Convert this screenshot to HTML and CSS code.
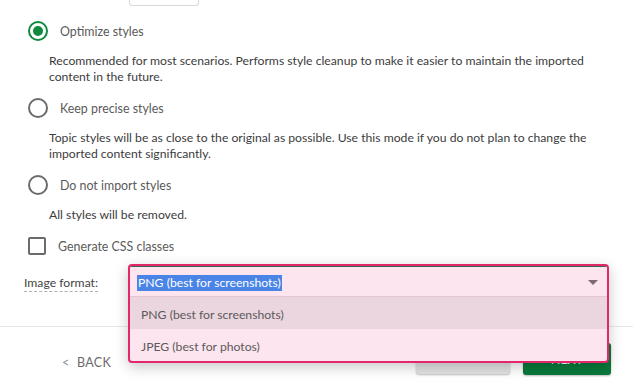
FILE: index.html
```html
<!DOCTYPE html>
<html>
<head>
<meta charset="utf-8">
<link rel="stylesheet" href="styles.css">
</head>
<body>
<div class="page">
  <div class="topbox"></div>
  <div class="content">
    <div class="radio-row r1">
      <span class="radio checked"><span class="dot"></span></span>
      <span class="label">Optimize styles</span>
    </div>
    <p class="desc">Recommended for most scenarios. Performs style cleanup to make it easier to maintain the imported content in the future.</p>
    <div class="radio-row">
      <span class="radio"></span>
      <span class="label">Keep precise styles</span>
    </div>
    <p class="desc">Topic styles will be as close to the original as possible. Use this mode if you do not plan to change the imported content significantly.</p>
    <div class="radio-row">
      <span class="radio"></span>
      <span class="label">Do not import styles</span>
    </div>
    <p class="desc d3">All styles will be removed.</p>
    <div class="check-row">
      <span class="checkbox"></span>
      <span class="label">Generate CSS classes</span>
    </div>
  </div>
  <div class="format-row">
    <span class="format-label">Image format:</span>
    <div class="combo">
      <div class="combo-frame">
        <div class="combo-head">
          <span class="sel">PNG (best for screenshots)</span>
          <span class="arrow"></span>
        </div>
        <div class="opt hover">PNG (best for screenshots)</div>
        <div class="opt">JPEG (best for photos)</div>
      </div>
    </div>
  </div>
  <div class="footer">
    <div class="back"><span class="chev">&lt;</span> BACK</div>
    <div class="btns">
      <div class="btn cancel">CANCEL</div>
      <div class="btn next">NEXT</div>
    </div>
  </div>
</div>
</body>
</html>
```
FILE: styles.css
```css
* { box-sizing: border-box; }
html, body { margin: 0; padding: 0; background: #fff; }
body {
  font-family: "Lato", "Noto Sans", sans-serif;
  font-size: 12.2px;
  color: #333;
  width: 633px;
  height: 387px;
  overflow: hidden;
}
.page { position: relative; }
.topbox {
  margin-left: 129px;
  width: 70px;
  height: 6px;
  border: 1px solid #d9d9d9;
  border-top: none;
  border-radius: 0 0 3px 3px;
}
.content { padding-left: 28px; }
.radio-row {
  display: flex;
  align-items: center;
  height: 20px;
  margin-top: 13px;
}
.radio-row.r1 { margin-top: 15px; }
.radio {
  width: 20px;
  height: 20px;
  border: 2px solid #6b6b6b;
  border-radius: 50%;
  display: flex;
  align-items: center;
  justify-content: center;
  flex: none;
}
.radio.checked { border-color: #0f8a3f; }
.dot { width: 10px; height: 10px; border-radius: 50%; background: #0f8a3f; }
.label {
  margin-left: 12px;
  font-size: 12.4px;
  color: #5a5a5a;
}
.desc {
  margin: 12px 0 0 21px;
  line-height: 16px;
  font-size: 12.2px;
  color: #3c3c3c;
  width: 560px;
}
.desc.d3 { margin-top: 12px; }
.check-row {
  display: flex;
  align-items: center;
  margin-top: 14px;
  height: 18px;
}
.checkbox {
  width: 18px;
  height: 18px;
  border: 2px solid #6b6b6b;
  border-radius: 2px;
  flex: none;
}
.check-row .label { margin-left: 12px; }
.format-row {
  display: flex;
  align-items: center;
  margin-top: 9px;
  height: 32px;
}
.format-label {
  margin-left: 24px;
  margin-top: 4px;
  width: 104px;
  font-size: 12.2px;
  color: #444;
  text-decoration: underline dashed #b0b0b0;
  text-underline-offset: 4px;
}
.combo {
  position: relative;
  width: 481px;
  height: 32px;
}
.combo-frame {
  position: absolute;
  top: 0;
  left: 0;
  width: 481px;
  border: 2px solid #e2286a;
  border-radius: 4px;
  background: #fce5ef;
  box-shadow: 0 4px 14px rgba(0,0,0,0.22);
  z-index: 5;
  overflow: hidden;
}
.combo-head {
  height: 31px;
  border-top: 1px solid #356b4c;
  border-bottom: 1px solid #e3c6d2;
  display: flex;
  align-items: center;
  justify-content: space-between;
  padding: 3px 9px 0 7px;
}
.sel {
  background: #4a84e6;
  color: #fff;
  font-size: 12.2px;
  line-height: 16px;
  padding: 0 1px;
}
.arrow {
  width: 0;
  height: 0;
  margin-top: -2px;
  border-left: 5px solid transparent;
  border-right: 5px solid transparent;
  border-top: 5px solid #7b6b72;
}
.opt {
  height: 32px;
  display: flex;
  align-items: center;
  padding: 3px 0 0 11px;
  font-size: 12.2px;
  color: #5a5a5a;
}
.opt.hover { background: #ebd5de; }
.footer {
  margin-top: 30px;
  border-top: 1px solid #e8e8e8;
  display: flex;
  align-items: flex-start;
  justify-content: space-between;
  padding: 16px 22px 0 62px;
}
.back {
  margin-top: 12px;
  font-size: 12.5px;
  color: #6a6a6a;
  letter-spacing: 0.3px;
}
.chev { margin-right: 4px; color: #888; }
.btns { display: flex; gap: 13px; }
.btn {
  height: 31px;
  display: flex;
  align-items: center;
  justify-content: center;
  font-size: 12.5px;
  border-radius: 3px;
}
.cancel {
  width: 94px;
  background: #e2e2e2;
  color: #333;
  box-shadow: 0 1px 2px rgba(0,0,0,0.25);
}
.next {
  width: 88px;
  height: 32px;
  background: #087a3a;
  color: #fff;
  box-shadow: 0 1px 2px rgba(0,0,0,0.25);
}
```
